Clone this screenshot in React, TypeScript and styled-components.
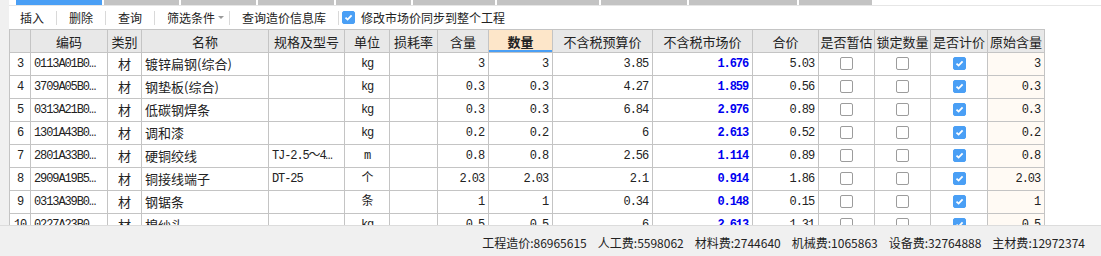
import React from 'react';
import styled, { createGlobalStyle } from 'styled-components';

const GlobalStyle = createGlobalStyle`
  html, body {
    margin: 0;
    padding: 0;
  }
  body {
    font-family: "Noto Sans CJK SC", "Noto Sans", sans-serif;
    background: #ffffff;
    overflow: hidden;
  }
`;

type Align = 'left' | 'center' | 'right';
type Kind = 'text' | 'mono' | 'price' | 'check' | 'origin';

interface Column {
  key: string;
  title: string;
  width: number;
  align: Align;
  kind: Kind;
}

const columns: Column[] = [
  { key: 'no', title: '', width: 21, align: 'center', kind: 'mono' },
  { key: 'code', title: '编码', width: 77, align: 'left', kind: 'mono' },
  { key: 'type', title: '类别', width: 34, align: 'center', kind: 'text' },
  { key: 'name', title: '名称', width: 127, align: 'left', kind: 'text' },
  { key: 'spec', title: '规格及型号', width: 76, align: 'left', kind: 'mono' },
  { key: 'unit', title: '单位', width: 45, align: 'center', kind: 'mono' },
  { key: 'loss', title: '损耗率', width: 48, align: 'right', kind: 'mono' },
  { key: 'content', title: '含量', width: 51, align: 'right', kind: 'mono' },
  { key: 'qty', title: '数量', width: 64, align: 'right', kind: 'mono' },
  { key: 'budget', title: '不含税预算价', width: 100, align: 'right', kind: 'mono' },
  { key: 'market', title: '不含税市场价', width: 100, align: 'right', kind: 'price' },
  { key: 'total', title: '合价', width: 66, align: 'right', kind: 'mono' },
  { key: 'est', title: '是否暂估', width: 56, align: 'center', kind: 'check' },
  { key: 'lock', title: '锁定数量', width: 56, align: 'center', kind: 'check' },
  { key: 'priced', title: '是否计价', width: 57, align: 'center', kind: 'check' },
  { key: 'origin', title: '原始含量', width: 57, align: 'right', kind: 'origin' },
];

type Row = Record<string, string | boolean>;

const rows: Row[] = [
  { no: '3', code: '0113A01B0…', type: '材', name: '镀锌扁钢(综合)', spec: '', unit: 'kg', loss: '', content: '3', qty: '3', budget: '3.85', market: '1.676', total: '5.03', est: false, lock: false, priced: true, origin: '3' },
  { no: '4', code: '3709A05B0…', type: '材', name: '钢垫板(综合)', spec: '', unit: 'kg', loss: '', content: '0.3', qty: '0.3', budget: '4.27', market: '1.859', total: '0.56', est: false, lock: false, priced: true, origin: '0.3' },
  { no: '5', code: '0313A21B0…', type: '材', name: '低碳钢焊条', spec: '', unit: 'kg', loss: '', content: '0.3', qty: '0.3', budget: '6.84', market: '2.976', total: '0.89', est: false, lock: false, priced: true, origin: '0.3' },
  { no: '6', code: '1301A43B0…', type: '材', name: '调和漆', spec: '', unit: 'kg', loss: '', content: '0.2', qty: '0.2', budget: '6', market: '2.613', total: '0.52', est: false, lock: false, priced: true, origin: '0.2' },
  { no: '7', code: '2801A33B0…', type: '材', name: '硬铜绞线', spec: 'TJ-2.5～4…', unit: 'm', loss: '', content: '0.8', qty: '0.8', budget: '2.56', market: '1.114', total: '0.89', est: false, lock: false, priced: true, origin: '0.8' },
  { no: '8', code: '2909A19B5…', type: '材', name: '铜接线端子', spec: 'DT-25', unit: '个', loss: '', content: '2.03', qty: '2.03', budget: '2.1', market: '0.914', total: '1.86', est: false, lock: false, priced: true, origin: '2.03' },
  { no: '9', code: '0313A39B0…', type: '材', name: '钢锯条', spec: '', unit: '条', loss: '', content: '1', qty: '1', budget: '0.34', market: '0.148', total: '0.15', est: false, lock: false, priced: true, origin: '1' },
  { no: '10', code: '0227A23B0…', type: '材', name: '棉纱头', spec: '', unit: 'kg', loss: '', content: '0.5', qty: '0.5', budget: '6', market: '2.613', total: '1.31', est: false, lock: false, priced: true, origin: '0.5' },
];

const tabs = [
  { width: 86, active: true },
  { width: 75 },
  { width: 75 },
  { width: 76 },
  { width: 75 },
  { width: 82 },
  { width: 102 },
  { width: 86 },
  { width: 108 },
  { width: 73 },
];

const totals = [
  ['工程造价', '86965615'],
  ['人工费', '5598062'],
  ['材料费', '2744640'],
  ['机械费', '1065863'],
  ['设备费', '32764888'],
  ['主材费', '12972374'],
];

const Page = styled.div`
  display: flex;
  flex-direction: column;
  height: 100vh;
  width: 100vw;
`;

const Body = styled.div`
  flex: 1;
  display: flex;
  min-height: 0;
`;

const LeftRail = styled.div`
  width: 9px;
  flex: none;
  background: #f0f0f0;
`;

const Main = styled.div`
  flex: 1;
  display: flex;
  flex-direction: column;
  min-width: 0;
`;

const TabStrip = styled.div`
  height: 5px;
  flex: none;
  display: flex;
  gap: 2px;
  padding-left: 7px;
  border-bottom: 1px solid #e6e6e6;
`;

const TabSeg = styled.div<{ $active?: boolean }>`
  height: 5px;
  background: ${(p) => (p.$active ? '#4a9ff5' : '#c3c3c3')};
`;

const Toolbar = styled.div`
  height: 23px;
  flex: none;
  display: flex;
  align-items: center;
  padding-left: 11px;
  font-size: 12px;
  color: #222;
`;

const ToolItem = styled.span<{ $tight?: boolean }>`
  display: flex;
  align-items: center;
  padding-right: ${(p) => (p.$tight ? '5px' : '12px')};
  white-space: nowrap;
`;

const ToolSep = styled.span`
  width: 1px;
  height: 14px;
  background: #d9d9d9;
  margin-right: 12px;
`;

const Caret = styled.span`
  margin-left: 3px;
  width: 0;
  height: 0;
  border-left: 3px solid transparent;
  border-right: 3px solid transparent;
  border-top: 3px solid #9a9a9a;
`;

const CheckLabel = styled.label`
  display: flex;
  align-items: center;
  gap: 6px;
  margin-left: -9px;
  white-space: nowrap;
`;

const GridWrap = styled.div`
  flex: 1;
  overflow: hidden;
  min-height: 0;
`;

const Table = styled.table`
  table-layout: fixed;
  border-collapse: separate;
  border-spacing: 0;
  border-top: 1px solid #c4c4c4;
  border-left: 1px solid #c4c4c4;
`;

const Th = styled.th<{ $focus?: boolean }>`
  height: 22px;
  padding: 0;
  font-size: 13px;
  font-weight: ${(p) => (p.$focus ? 700 : 400)};
  color: #222;
  text-align: center;
  white-space: nowrap;
  overflow: hidden;
  background: ${(p) => (p.$focus ? '#fde6c9' : '#e8e8e8')};
  border-right: 1px solid #c4c4c4;
  border-bottom: 1px solid #c4c4c4;
  box-shadow: ${(p) => (p.$focus ? 'inset 0 -2px 0 #4a9ff5' : 'none')};
`;

const Td = styled.td<{ $align: Align; $kind: Kind }>`
  height: 22px;
  padding: 0 ${(p) => (p.$align === 'right' ? '4px' : '0')} 0 ${(p) => (p.$align === 'left' ? '3px' : '0')};
  text-align: ${(p) => p.$align};
  white-space: nowrap;
  overflow: hidden;
  line-height: 22px;
  color: ${(p) => (p.$kind === 'price' ? '#0000f0' : '#222')};
  font-weight: ${(p) => (p.$kind === 'price' ? 700 : 400)};
  font-family: ${(p) =>
    p.$kind === 'text' ? '"Noto Sans CJK SC", sans-serif' : '"Liberation Mono", "Noto Sans CJK SC", monospace'};
  font-size: ${(p) => (p.$kind === 'text' ? '13px' : '12px')};
  letter-spacing: ${(p) => (p.$kind === 'text' ? '0' : '-1.1px')};
  background: ${(p) => (p.$kind === 'origin' ? '#fffaf4' : '#ffffff')};
  border-right: 1px solid #c4c4c4;
  border-bottom: 1px solid #c4c4c4;
  vertical-align: middle;
`;

const Box = styled.span<{ $checked: boolean }>`
  display: inline-flex;
  align-items: center;
  justify-content: center;
  box-sizing: border-box;
  width: 13px;
  height: 13px;
  border-radius: 2px;
  vertical-align: middle;
  border: 1px solid ${(p) => (p.$checked ? '#4a9ff5' : '#9c9c9c')};
  background: ${(p) => (p.$checked ? '#4a9ff5' : '#ffffff')};
`;

const StatusBar = styled.div`
  height: 28px;
  flex: none;
  display: flex;
  align-items: center;
  justify-content: flex-end;
  gap: 11px;
  padding-right: 16px;
  padding-top: 2px;
  box-sizing: content-box;
  background: #f0f0f0;
  border-top: 1px solid #dcdcdc;
  font-size: 12px;
  color: #222;
`;

const Total = styled.span`
  white-space: nowrap;
`;

const Check = ({ checked }: { checked: boolean }) => (
  <Box $checked={checked}>
    {checked && (
      <svg width="9" height="9" viewBox="0 0 9 9">
        <polyline points="1.5,4.6 3.6,6.6 7.6,2.4" fill="none" stroke="#ffffff" strokeWidth="1.8" />
      </svg>
    )}
  </Box>
);

const App = (): JSX.Element => {
  return (
    <Page>
      <GlobalStyle />
      <Body>
        <LeftRail />
        <Main>
          <TabStrip>
            {tabs.map((t, i) => (
              <TabSeg key={i} $active={t.active} style={{ width: t.width }} />
            ))}
          </TabStrip>
          <Toolbar>
            <ToolItem>插入</ToolItem>
            <ToolSep />
            <ToolItem>删除</ToolItem>
            <ToolSep />
            <ToolItem>查询</ToolItem>
            <ToolSep />
            <ToolItem $tight>
              筛选条件
              <Caret />
            </ToolItem>
            <ToolSep />
            <ToolItem>查询造价信息库</ToolItem>
            <ToolSep />
            <CheckLabel>
              <Check checked />
              修改市场价同步到整个工程
            </CheckLabel>
          </Toolbar>
          <GridWrap>
            <Table>
              <colgroup>
                {columns.map((c) => (
                  <col key={c.key} style={{ width: c.width }} />
                ))}
              </colgroup>
              <thead>
                <tr>
                  {columns.map((c) => (
                    <Th key={c.key} $focus={c.key === 'qty'}>
                      {c.title}
                    </Th>
                  ))}
                </tr>
              </thead>
              <tbody>
                {rows.map((r) => (
                  <tr key={String(r.no)}>
                    {columns.map((c) => (
                      <Td key={c.key} $align={c.align} $kind={c.kind}>
                        {c.kind === 'check' ? <Check checked={Boolean(r[c.key])} /> : String(r[c.key])}
                      </Td>
                    ))}
                  </tr>
                ))}
              </tbody>
            </Table>
          </GridWrap>
        </Main>
      </Body>
      <StatusBar>
        {totals.map(([label, value]) => (
          <Total key={label}>
            {label}:{value}
          </Total>
        ))}
      </StatusBar>
    </Page>
  );
};

export default App;
